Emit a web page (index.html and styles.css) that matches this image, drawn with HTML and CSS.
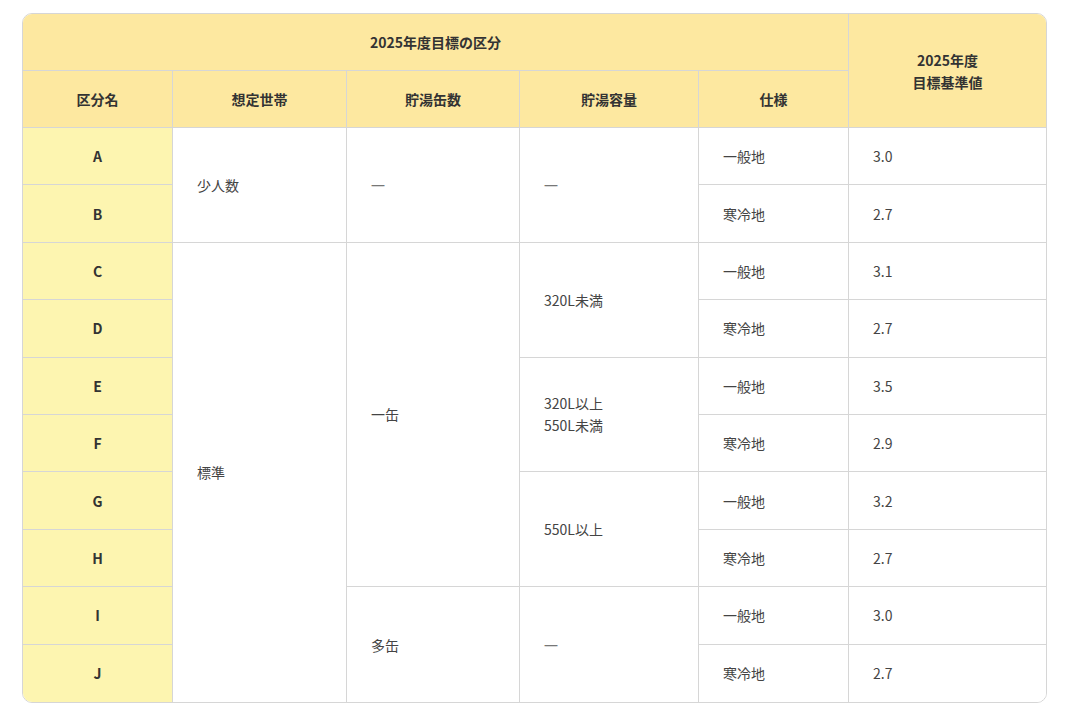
FILE: index.html
```html
<!DOCTYPE html>
<html lang="ja">
<head>
<meta charset="utf-8">
<link rel="stylesheet" href="styles.css">
</head>
<body>
<div class="wrap">
<table class="tbl">
  <colgroup>
    <col class="c1"><col class="c2"><col class="c3"><col class="c4"><col class="c5"><col class="c6">
  </colgroup>
  <thead>
    <tr class="hrow">
      <th colspan="5">2025年度目標の区分</th>
      <th rowspan="2" class="last">2025年度<br>目標基準値</th>
    </tr>
    <tr class="hrow">
      <th>区分名</th>
      <th>想定世帯</th>
      <th>貯湯缶数</th>
      <th>貯湯容量</th>
      <th>仕様</th>
    </tr>
  </thead>
  <tbody>
    <tr><td class="name">A</td><td rowspan="2">少人数</td><td rowspan="2" class="dash">—</td><td rowspan="2" class="dash">—</td><td>一般地</td><td class="last">3.0</td></tr>
    <tr><td class="name">B</td><td>寒冷地</td><td class="last">2.7</td></tr>
    <tr><td class="name">C</td><td rowspan="8" class="btm">標準</td><td rowspan="6">一缶</td><td rowspan="2">320L未満</td><td>一般地</td><td class="last">3.1</td></tr>
    <tr><td class="name">D</td><td>寒冷地</td><td class="last">2.7</td></tr>
    <tr><td class="name">E</td><td rowspan="2">320L以上<br>550L未満</td><td>一般地</td><td class="last">3.5</td></tr>
    <tr><td class="name">F</td><td>寒冷地</td><td class="last">2.9</td></tr>
    <tr><td class="name">G</td><td rowspan="2">550L以上</td><td>一般地</td><td class="last">3.2</td></tr>
    <tr><td class="name">H</td><td>寒冷地</td><td class="last">2.7</td></tr>
    <tr><td class="name">I</td><td rowspan="2" class="btm">多缶</td><td rowspan="2" class="dash btm">—</td><td>一般地</td><td class="last">3.0</td></tr>
    <tr><td class="name btm">J</td><td class="btm">寒冷地</td><td class="last btm">2.7</td></tr>
  </tbody>
</table>
</div>
</body>
</html>
```
FILE: styles.css
```css
html, body {
  margin: 0;
  padding: 0;
  background: #ffffff;
}
body {
  font-family: "Noto Sans CJK JP", "Noto Sans", sans-serif;
  color: #333333;
  font-size: 14px;
  line-height: 22px;
}
.wrap {
  padding: 13px 23px 13px 22px;
}
.tbl {
  width: 1023px;
  table-layout: fixed;
  border-collapse: separate;
  border-spacing: 0;
  border: 1px solid #d6d6d6;
  border-radius: 10px;
  overflow: hidden;
}
.c1 { width: 150px; }
.c2 { width: 174px; }
.c3 { width: 173px; }
.c4 { width: 179px; }
.c5 { width: 150px; }
.c6 { width: 197px; }
.tbl th, .tbl td {
  border-right: 1px solid #d6d6d6;
  border-bottom: 1px solid #d6d6d6;
  padding: 0 24px;
  vertical-align: middle;
}
.tbl th {
  background: #fde8a0;
  font-weight: 700;
  font-size: 14px;
  text-align: center;
  color: #333333;
}
.hrow { height: 57px; }
.tbl tbody tr { height: 57.4px; }
.tbl td {
  text-align: left;
  color: #444444;
  background: #ffffff;
}
.tbl td.name {
  background: #fdf5b0;
  text-align: center;
  font-weight: 700;
  font-size: 14px;
  color: #333333;
}
.tbl td.dash {
  font-family: "Noto Sans", "Liberation Sans", sans-serif;
  color: #777777;
}
.tbl .last { border-right: none; }
.tbl .btm { border-bottom: none; }
```
